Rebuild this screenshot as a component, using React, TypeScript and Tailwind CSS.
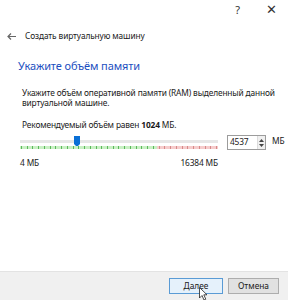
export default function App() {
  const ticks = Array.from({ length: 35 }, (_, i) => i);

  return (
    <div
      className="relative w-[288px] h-[300px] bg-white flex flex-col text-[#1a1a1a] overflow-hidden"
      style={{ fontFamily: '"Noto Sans", "Open Sans", sans-serif' }}
    >
      {/* title bar */}
      <div className="h-[20px] flex items-center justify-end pr-[11px] gap-[26px] text-[11px] text-[#333]">
        <span>?</span>
        <span className="text-[13px] font-light">✕</span>
      </div>

      {/* back row */}
      <div className="h-[32px] flex items-center pl-[7px] gap-[9px] text-[8.3px] tracking-[-0.1px]">
        <svg width="9" height="7" viewBox="0 0 9 7" className="text-[#666]">
          <path d="M4 0.5 L1 3.5 L4 6.5 M1 3.5 H9" stroke="currentColor" strokeWidth="1.2" fill="none" />
        </svg>
        <span>Создать виртуальную машину</span>
      </div>

      {/* heading */}
      <div className="pl-[18px] pt-[6px] text-[11px] tracking-[-0.1px] text-[#1c4fbf]">Укажите объём памяти</div>

      {/* body */}
      <div className="pl-[22px] pt-[13px] text-[8.35px] leading-[10.5px] tracking-[-0.15px]">
        <p className="pr-[6px]">Укажите объём оперативной памяти (RAM) выделенный данной виртуальной машине.</p>
        <p className="mt-[11px]">
          Рекомендуемый объём равен <b>1024</b> МБ.
        </p>

        <div className="mt-[4px] flex items-start">
          <div className="w-[198px] shrink-0 ml-[-2px]">
            <div className="relative h-[16px]">
              <div className="absolute left-0 right-0 top-[6px] h-[3px] bg-[#e6e6e6]" />
              <svg className="absolute left-[54px] top-[2px]" width="6" height="11" viewBox="0 0 6 11">
                <path d="M0 0 H6 V8 L3 11 L0 8 Z" fill="#0a6fd6" />
              </svg>
              <div className="absolute left-0 w-[137px] top-[12px] h-[3px] bg-[#c9f0c4]" />
              <div className="absolute left-[137px] right-0 top-[12px] h-[3px] bg-[#f6cccc]" />
              <div className="absolute left-0 right-0 top-[12px] flex justify-between px-[1px]">
                {ticks.map((t) => (
                  <div
                    key={t}
                    className={t < 24 ? 'w-px h-[3px] bg-[#5bb85b]' : 'w-px h-[3px] bg-[#d68a8a]'}
                  />
                ))}
              </div>
            </div>
            <div className="mt-[8px] flex justify-between">
              <span>4 МБ</span>
              <span>16384 МБ</span>
            </div>
          </div>

          <div className="shrink-0 ml-[9px] mt-[1px] w-[39px] h-[15px] border border-[#9c9c9c] bg-white flex items-center">
            <span className="pl-[2px] flex-1">4537</span>
            <div className="w-[8px] h-full flex flex-col items-center justify-center gap-[2px] bg-[#f0f0f0] border-l border-[#dcdcdc]">
              <svg width="5" height="3" viewBox="0 0 5 3"><path d="M0 3 L2.5 0 L5 3 Z" fill="#444" /></svg>
              <svg width="5" height="3" viewBox="0 0 5 3"><path d="M0 0 L2.5 3 L5 0 Z" fill="#444" /></svg>
            </div>
          </div>
          <span className="shrink-0 ml-[6px] mt-[2px]">МБ</span>
        </div>
      </div>

      <div className="flex-1" />

      {/* footer */}
      <div className="h-[29px] bg-[#f0f0f0] border-t border-[#e3e3e3] flex items-start justify-end gap-[5px] pr-[9px] pt-[6px]">
        <button className="w-[54px] h-[16px] border border-[#5a9bd5] bg-[#e5f1fb] text-[8.35px] leading-none">
          Далее
        </button>
        <button className="w-[51px] h-[16px] border border-[#adadad] bg-[#e1e1e1] text-[8.35px] leading-none">
          Отмена
        </button>
      </div>

      {/* mouse cursor */}
      <svg className="absolute left-[199px] top-[287px]" width="9" height="14" viewBox="0 0 9 14">
        <path d="M0.5 0.5 V11 L3 8.5 L5 13 L6.8 12.2 L4.8 7.8 H8 Z" fill="#fff" stroke="#222" strokeWidth="0.8" />
      </svg>
    </div>
  );
}
